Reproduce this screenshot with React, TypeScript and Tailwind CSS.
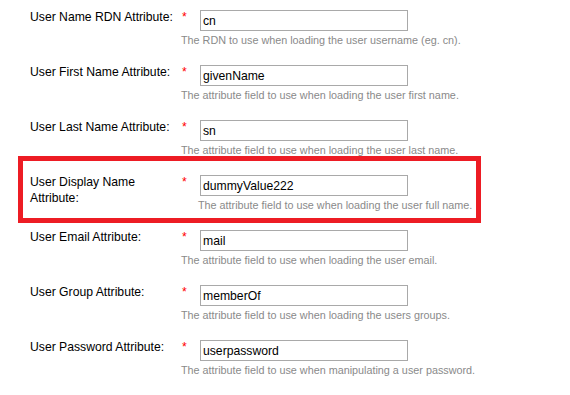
import React from "react";

type Row = { label: string; value: string; help: string; highlight?: boolean };

const rows: Row[] = [
  { label: "User Name RDN Attribute:", value: "cn", help: "The RDN to use when loading the user username (eg. cn)." },
  { label: "User First Name Attribute:", value: "givenName", help: "The attribute field to use when loading the user first name." },
  { label: "User Last Name Attribute:", value: "sn", help: "The attribute field to use when loading the user last name." },
  { label: "User Display Name Attribute:", value: "dummyValue222", help: "The attribute field to use when loading the user full name.", highlight: true },
  { label: "User Email Attribute:", value: "mail", help: "The attribute field to use when loading the user email." },
  { label: "User Group Attribute:", value: "memberOf", help: "The attribute field to use when loading the users groups." },
  { label: "User Password Attribute:", value: "userpassword", help: "The attribute field to use when manipulating a user password." },
];

function FieldRow({ row }: { row: Row }) {
  return (
    <div className="relative flex h-[55px] items-start">
      {row.highlight && (
        <div className="pointer-events-none absolute left-[-12px] top-[-18px] h-[67px] w-[463px] border-[5px] border-[#ed1c24]" />
      )}
      <div className="w-[151px] text-[12.2px] leading-[16px] text-black">{row.label}</div>
      <div className="flex flex-col">
        <div className="flex items-start">
          <span className="w-[19px] pl-[1px] text-[12.2px] leading-[16px] text-[#ff0000]">*</span>
          <input
            readOnly
            value={row.value}
            className="mt-[1px] h-[21px] w-[208px] border border-[#a9a9a9] bg-white px-[2px] text-[12.2px] text-black outline-none"
          />
        </div>
        <div className={`mt-[2px] text-[10.8px] leading-[14px] text-[#8a8a8a] ${row.highlight ? "pl-[17px]" : ""}`}>
          {row.help}
        </div>
      </div>
    </div>
  );
}

export default function App() {
  return (
    <div
      className="h-[395px] w-[570px] overflow-hidden bg-white pl-[30px] pt-[9px]"
      style={{ fontFamily: '"Liberation Sans", Arial, sans-serif' }}
    >
      {rows.map((r) => (
        <FieldRow key={r.label} row={r} />
      ))}
    </div>
  );
}
